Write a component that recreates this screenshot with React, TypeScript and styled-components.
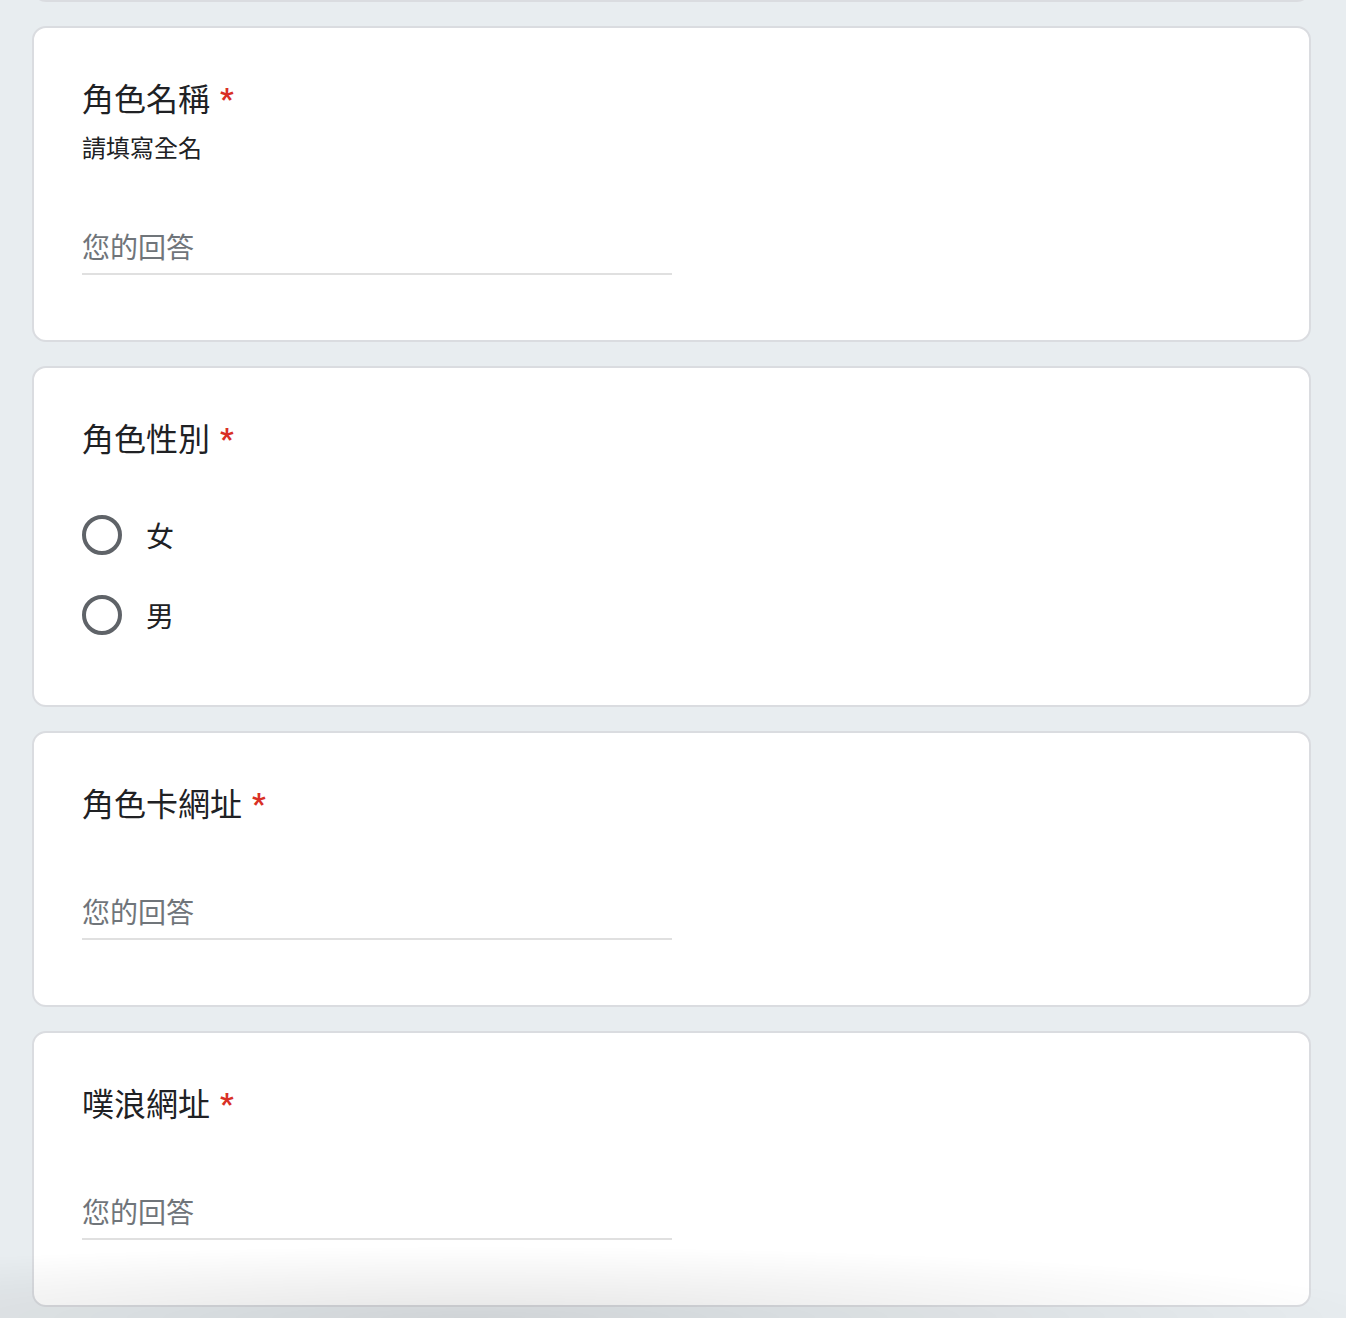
import React from 'react';
import styled, { createGlobalStyle } from 'styled-components';

const GlobalStyle = createGlobalStyle`
  html, body {
    margin: 0;
    padding: 0;
    background: #e8edf0;
    font-family: "Noto Sans CJK TC", "Noto Sans", Roboto, sans-serif;
  }
  body {
    min-height: 100vh;
  }
`;

type Question = {
  title: string;
  description?: string;
  kind: 'text' | 'radio';
  options?: string[];
};

const questions: Question[] = [
  { title: '角色名稱', description: '請填寫全名', kind: 'text' },
  { title: '角色性別', kind: 'radio', options: ['女', '男'] },
  { title: '角色卡網址', kind: 'text' },
  { title: '噗浪網址', kind: 'text' },
];

function App() {
  return (
    <Page>
      <GlobalStyle />
      <CardTail />
      {questions.map((q) => (
        <Card key={q.title}>
          <Title>
            {q.title}
            <Required>*</Required>
          </Title>
          {q.description && <Description>{q.description}</Description>}
          {q.kind === 'text' && (
            <AnswerField>
              <Placeholder>您的回答</Placeholder>
            </AnswerField>
          )}
          {q.kind === 'radio' && (
            <RadioList>
              {q.options?.map((opt) => (
                <RadioRow key={opt}>
                  <RadioCircle />
                  <RadioLabel>{opt}</RadioLabel>
                </RadioRow>
              ))}
            </RadioList>
          )}
        </Card>
      ))}
      <BottomShade />
    </Page>
  );
}

const Page = styled.div`
  display: flex;
  flex-direction: column;
  gap: 24px;
  width: 1279px;
  margin-left: 32px;
  padding-bottom: 13px;
`;

const Card = styled.div`
  box-sizing: border-box;
  background: #fff;
  border: 2px solid #dadce0;
  border-radius: 14px;
  padding: 45px 48px 50px;
`;

const CardTail = styled(Card)`
  height: 16px;
  padding: 0;
  margin-top: -14px;
  border-top: none;
  border-radius: 0 0 14px 14px;
`;

const Title = styled.div`
  font-size: 32px;
  line-height: 48px;
  color: #202124;
  display: flex;
  align-items: center;
`;

const Required = styled.span`
  color: #d93025;
  font-family: Roboto, "Liberation Sans", sans-serif;
  font-weight: 700;
  font-size: 30px;
  line-height: 30px;
  margin-left: 10px;
  margin-top: 4px;
`;

const Description = styled.div`
  font-size: 24px;
  line-height: 32px;
  color: #202124;
  margin: 10px 0 -2px;
`;

const AnswerField = styled.div`
  width: 590px;
  margin-top: 65px;
  margin-bottom: 15px;
  padding-bottom: 7px;
  border-bottom: 2px solid #e0e0e0;
`;

const Placeholder = styled.div`
  font-size: 28px;
  line-height: 40px;
  color: #70757a;
`;

const RadioList = styled.div`
  margin-top: 34px;
  display: flex;
  flex-direction: column;
`;

const RadioRow = styled.div`
  height: 80px;
  display: flex;
  align-items: center;
`;

const RadioCircle = styled.span`
  box-sizing: border-box;
  width: 40px;
  height: 40px;
  border-radius: 50%;
  border: 4px solid #5f6368;
  flex-shrink: 0;
`;

const RadioLabel = styled.span`
  margin-left: 24px;
  font-size: 28px;
  line-height: 40px;
  color: #202124;
`;

const BottomShade = styled.div`
  position: fixed;
  left: 0;
  right: 0;
  bottom: 0;
  height: 72px;
  pointer-events: none;
  background: radial-gradient(ellipse 70% 100% at 35% 100%, rgba(0, 0, 0, 0.1), rgba(0, 0, 0, 0));
`;

export default App;
